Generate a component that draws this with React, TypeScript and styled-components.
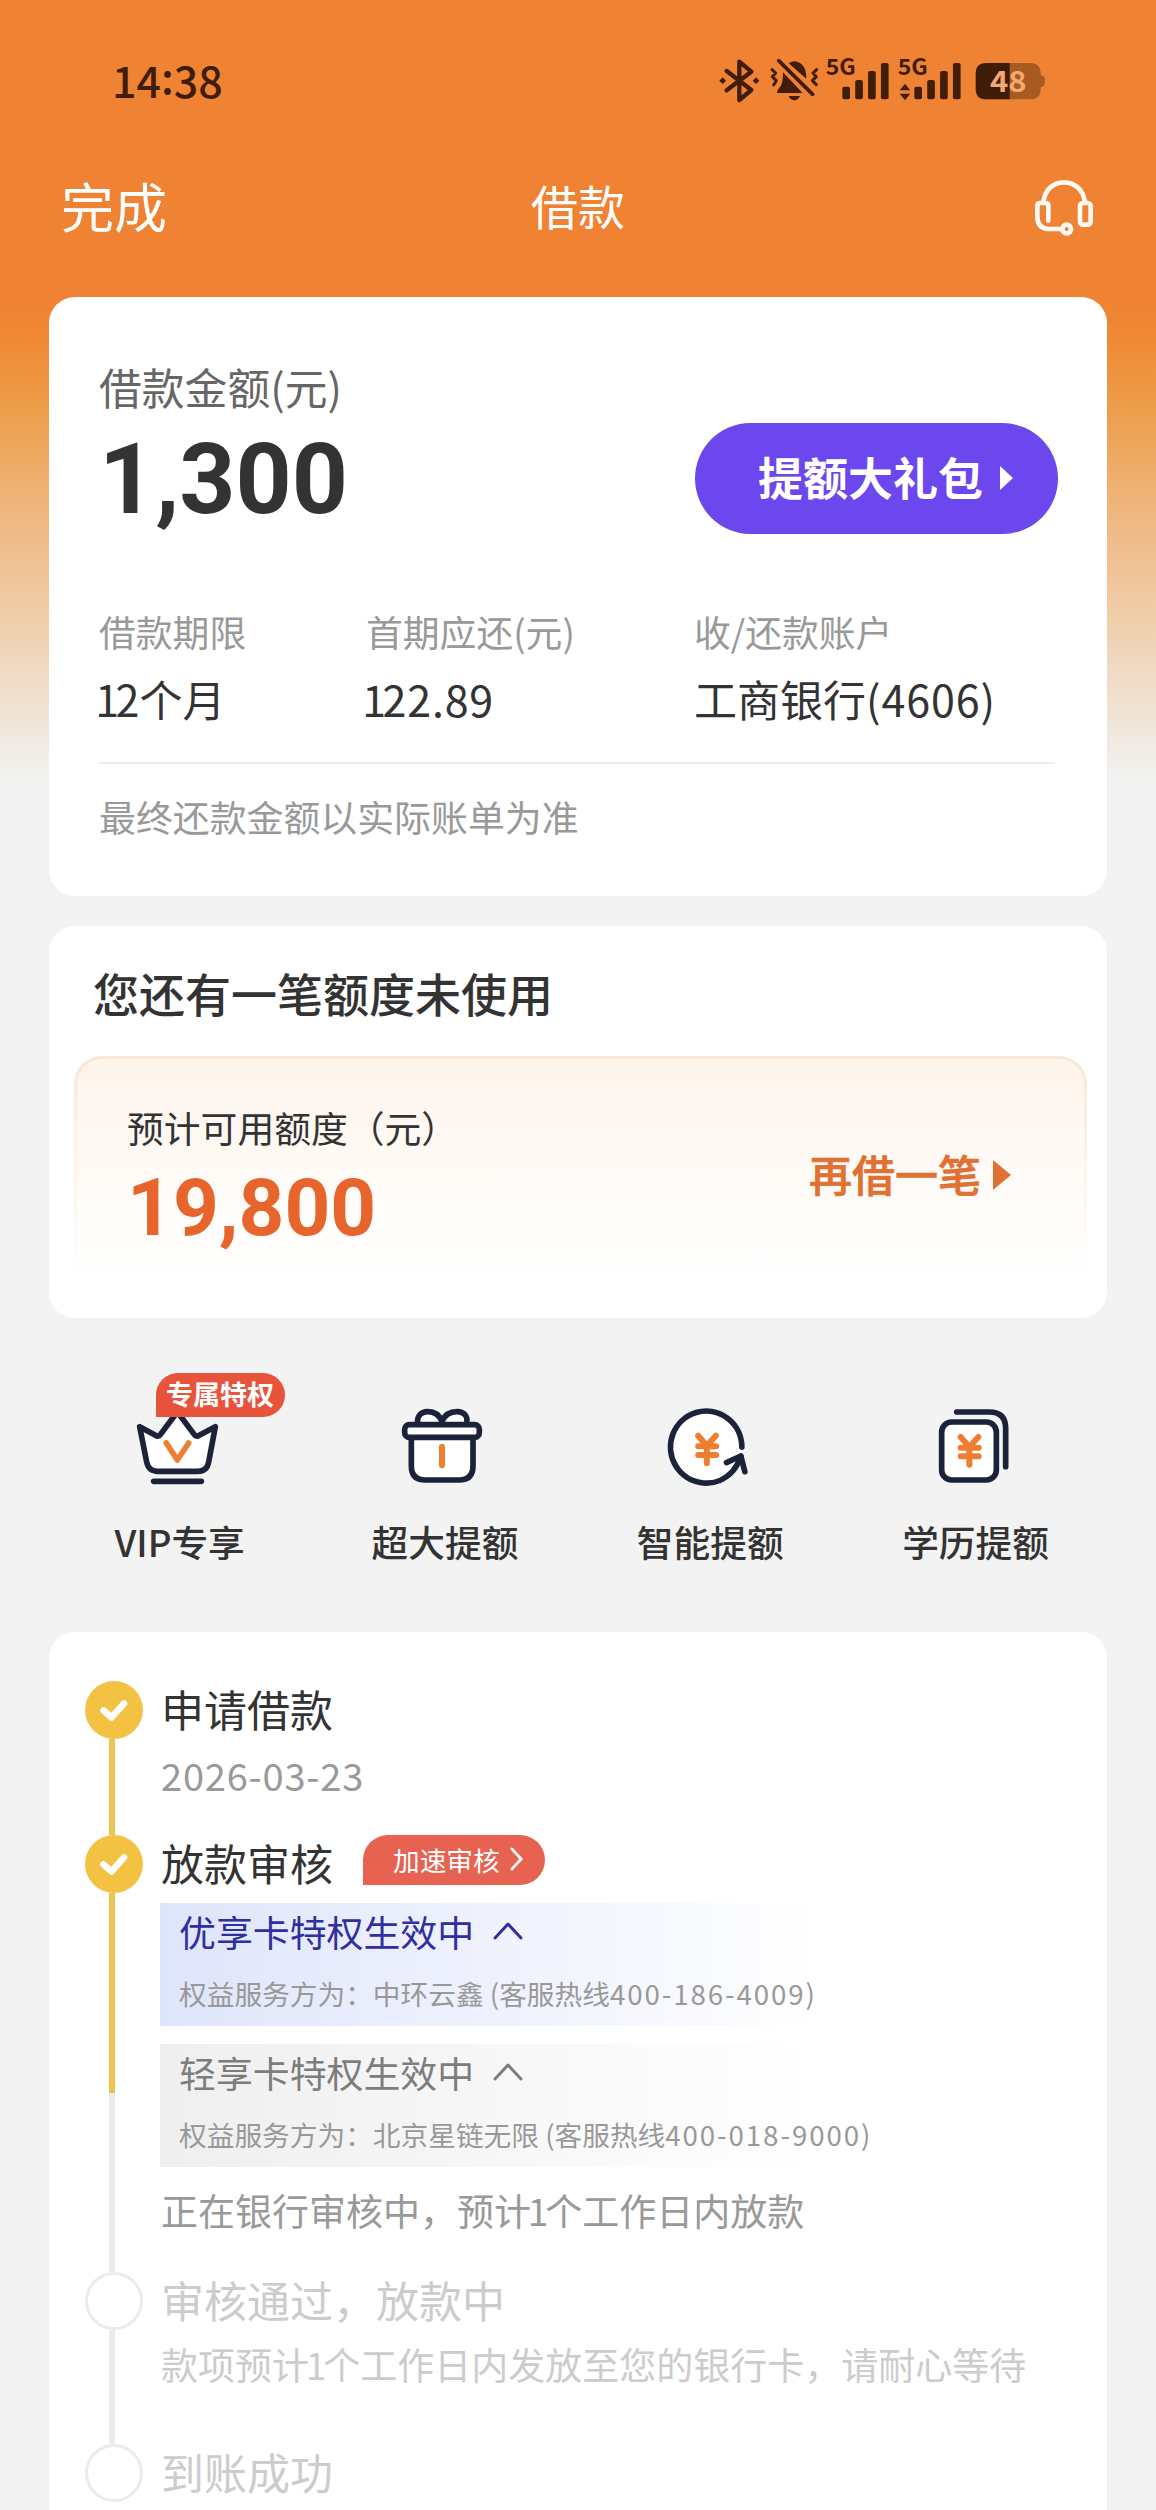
import React from "react";
import styled, { createGlobalStyle } from "styled-components";

const SANS = `"Noto Sans CJK SC", "Noto Sans", sans-serif`;
const NUMERIC = `Roboto, "Noto Sans CJK SC", sans-serif`;
const NAVY = "#1b2239";
const ORANGE = "#ee7f32";
const STATUS = "#3f1d08";

const GlobalStyle = createGlobalStyle`
  body { margin: 0; background: #f3f3f3; }
  * { box-sizing: border-box; }
`;

const Screen = styled.div`
  display: flex;
  flex-direction: column;
  width: 1156px;
  height: 2510px;
  overflow: hidden;
  font-family: ${SANS};
  color: #333;
  white-space: nowrap;
  background: linear-gradient(
    180deg,
    #ef8233 0, #ef8233 295px, #f08934 340px, #ed9e4a 410px, #efb072 485px,
    #f0be90 550px, #f0cca7 610px, #efdcc8 680px, #f1e8df 735px, #f3f3f3 785px
  );
`;

const StatusBar = styled.header`
  display: flex;
  justify-content: space-between;
  align-items: flex-start;
  height: 160px;
  padding: 40px 76px 0 112px;
`;

const Clock = styled.span`
  margin-top: -1px;
  font-size: 43px;
  font-weight: 500;
  line-height: 80px;
  color: ${STATUS};
`;

const Colon = styled.span`
  position: relative;
  top: -4px;
`;

const NavBar = styled.nav`
  display: grid;
  grid-template-columns: 1fr auto 1fr;
  align-items: center;
  height: 90px;
  margin-bottom: 47px;
  padding: 0 46px 0 61px;
  color: #fff;
`;

const DoneButton = styled.span`
  font-size: 53px;
  line-height: 84px;
  justify-self: start;
`;

const NavTitle = styled.h1`
  margin: 0;
  padding-right: 15px;
  font-size: 47px;
  font-weight: 400;
  line-height: 84px;
`;

const HeadsetSvg = styled.svg`
  justify-self: end;
  width: 90px;
  height: 80px;
  margin-top: 10px;
`;

const Card = styled.section<{ $height: number; $top?: number; $open?: boolean }>`
  display: flex;
  flex-direction: column;
  flex: none;
  height: ${(p) => p.$height}px;
  margin: ${(p) => p.$top ?? 0}px 49px 0;
  border-radius: ${(p) => (p.$open ? "26px 26px 0 0" : "26px")};
  background: #fff;
`;

const Line = styled.div<{ $size: number; $height: number; $top?: number; $color?: string; $weight?: number }>`
  margin-top: ${(p) => p.$top ?? 0}px;
  font-size: ${(p) => p.$size}px;
  line-height: ${(p) => p.$height}px;
  height: ${(p) => p.$height}px;
  color: ${(p) => p.$color ?? "#333"};
  font-weight: ${(p) => p.$weight ?? 400};
`;

const Figure = styled(Line)`
  font-family: ${NUMERIC};
  font-weight: 700;
`;

const LoanTop = styled.div`
  display: flex;
  justify-content: space-between;
  align-items: flex-start;
  height: 309px;
  padding: 59px 49px 0 50px;
`;

const GiftButton = styled.button`
  display: flex;
  align-items: center;
  gap: 17px;
  width: 363px;
  height: 111px;
  margin: 67px 0 0;
  padding: 0 0 4px 63px;
  border: 0;
  border-radius: 56px;
  background: #6b47ed;
  color: #fff;
  font: 700 45px ${SANS};
`;

const Triangle = styled.i<{ $w: number; $h: number; $color: string }>`
  width: 0;
  height: 0;
  margin-top: 3px;
  border-left: ${(p) => p.$w}px solid ${(p) => p.$color};
  border-top: ${(p) => p.$h / 2}px solid transparent;
  border-bottom: ${(p) => p.$h / 2}px solid transparent;
`;

const Details = styled.div`
  display: grid;
  grid-template-columns: 267px 328px 1fr;
  margin: 0 52px 0 50px;
  padding-bottom: 36px;
  border-bottom: 2px solid #ececec;
`;

const Inset = styled.div<{ $left: number }>`
  padding-left: ${(p) => p.$left}px;
`;

const QuotaPanel = styled.div`
  display: flex;
  justify-content: space-between;
  align-items: flex-start;
  height: 231px;
  margin: 34px 20px 0 25px;
  padding: 43px 73px 0 50px;
  border: 3px solid transparent;
  border-radius: 28px;
  background:
    linear-gradient(180deg, #fef4ec, #fffdfb 75%, #fff) padding-box,
    linear-gradient(180deg, #fae6d5, #fdf3ea 45%, #fff 95%) border-box;
`;

const BorrowAgain = styled.div`
  display: flex;
  align-items: center;
  gap: 12px;
  margin-top: 41px;
`;

const BorrowLabel = styled.span`
  font-size: 43px;
  font-weight: 500;
  line-height: 60px;
  color: #e17033;
  -webkit-text-stroke: 0.7px #e17033;
`;

const Services = styled.div`
  display: grid;
  grid-template-columns: repeat(4, 265.3px);
  flex: none;
  height: 314px;
  padding: 82px 0 0 47px;
`;

const Service = styled.div`
  position: relative;
  display: flex;
  flex-direction: column;
  align-items: center;
`;

const ServiceSvg = styled.svg`
  width: 96px;
  height: 96px;
  fill: none;
  stroke: ${NAVY};
  stroke-width: 17px;
  stroke-linecap: round;
  stroke-linejoin: round;
`;

const Privilege = styled.span`
  position: absolute;
  left: 109px;
  top: -27px;
  width: 129px;
  height: 44px;
  padding-left: 10px;
  border-radius: 22px 22px 22px 0;
  background: #e8533b;
  color: #fff;
  font-size: 27px;
  font-weight: 700;
  line-height: 41px;
`;

const Step = styled.div<{ $height: number }>`
  display: flex;
  flex: none;
  height: ${(p) => p.$height}px;
  padding-left: 36px;
`;

const Rail = styled.div`
  display: flex;
  flex-direction: column;
  flex: none;
  width: 76px;
`;

const Dot = styled.span<{ $done?: boolean }>`
  display: flex;
  flex: none;
  align-items: center;
  justify-content: center;
  width: 58px;
  height: 58px;
  border-radius: 50%;
  border: ${(p) => (p.$done ? "0" : "3px solid #ebebeb")};
  background: ${(p) => (p.$done ? "#f4c243" : "#fff")};
`;

const Track = styled.span<{ $color: string; $length?: number }>`
  flex: ${(p) => (p.$length ? `0 0 ${p.$length}px` : "1")};
  width: 6px;
  margin-left: 24px;
  background: ${(p) => p.$color};
`;

const StepBody = styled.div`
  flex: 1;
  margin-top: -1px;
`;

const TitleRow = styled.div`
  display: flex;
  align-items: flex-start;
`;

const SpeedUp = styled.span`
  display: flex;
  align-items: center;
  gap: 10px;
  width: 182px;
  height: 50px;
  margin: 1px 0 0 30px;
  padding: 0 0 2px 30px;
  border-radius: 25px 25px 25px 0;
  background: #e86252;
  color: #fff;
  font-size: 26.7px;
`;

const Benefit = styled.div<{ $tint: string }>`
  height: 123px;
  margin: 13px 0 18px -1px;
  padding: 3px 0 0 19px;
  background: linear-gradient(90deg, ${(p) => p.$tint}, #fff 660px);

  & + & {
    margin-top: 18px;
  }
`;

const BenefitTitle = styled.div<{ $color: string }>`
  display: flex;
  align-items: center;
  gap: 19px;
  height: 50px;
  font-size: 36.9px;
  line-height: 50px;
  color: ${(p) => p.$color};
`;

const Spaced = styled.span<{ $gap: number }>`
  letter-spacing: ${(p) => p.$gap}px;
`;

const One = styled.span`
  margin: 0 -0.085em;
`;

const Arrow = styled.svg<{ $w: number; $h: number }>`
  width: ${(p) => p.$w}px;
  height: ${(p) => p.$h}px;
  fill: none;
  stroke: currentColor;
  stroke-width: 3px;
  stroke-linecap: round;
  stroke-linejoin: round;
`;

function Bars({ x }: { x: number }) {
  const tops = [140, 120, 93, 69];
  return (
    <>
      {tops.map((top, i) => (
        <rect key={top} x={x + i * 38.6} y={top} width={23} height={178 - top} rx={6} />
      ))}
    </>
  );
}

function StatusIcons() {
  const stroke = { fill: "none", stroke: STATUS, strokeLinecap: "round" as const, strokeLinejoin: "round" as const };
  return (
    <svg width="380" height="80" viewBox="0 0 1140 240" fill={STATUS}>
      <path d="M80 93 L154 150 L118 180 V65 L154 95 L80 151" strokeWidth="13" {...stroke} />
      <path d="M68 112 l10 10 -10 10 -10 -10z M168 112 l10 10 -10 10 -10 -10z" />
      <path d="M236 62 L338 163" strokeWidth="11" {...stroke} />
      <path d="M249 97 L308 159 H231 Q231 150 242 138 Q249 126 249 97z" />
      <path d="M266 70 Q286 56 304 72 Q320 86 319 116z M266 168 H300 Q294 181 283 181 Q272 181 266 168z" />
      <path d="M216 89 l11 10 -10 11 12 12 -8 13 M350 89 l-11 10 10 11 -12 12 12 12" strokeWidth="9" {...stroke} />
      <text x="377" y="105" fontSize="67" fontWeight="700" fontFamily={SANS} textLength="90" lengthAdjust="spacingAndGlyphs">5G</text>
      <Bars x={427} />
      <text x="593" y="105" fontSize="67" fontWeight="700" fontFamily={SANS} textLength="90" lengthAdjust="spacingAndGlyphs">5G</text>
      <path d="M615 131 L631 151 H599z M599 161 H631 L615 181z" />
      <Bars x={643} />
      <path d="M859 69 H990 Q1022 69 1022 101 V104 Q1035 106 1035 123 Q1035 140 1022 142 V146 Q1022 178 990 178 H859z" fill="#a75b23" />
      <path d="M859 69 H929 V178 H859 Q827 178 827 146 V101 Q827 69 859 69z" />
      <text x="870" y="157" fontSize="88" fontWeight="700" fontFamily={SANS} fill="#f1a872" textLength="110" lengthAdjust="spacingAndGlyphs">48</text>
    </svg>
  );
}

function Headset() {
  return (
    <HeadsetSvg viewBox="0 0 270 240" fill="none" stroke="#fffaf3" strokeWidth="14" strokeLinecap="round" strokeLinejoin="round">
      <path d="M70 97 C74 60 98 37 132 37 C166 37 190 60 195 97" />
      <path d="M85 152 V107 Q85 99 77 99 H60 Q52 99 52 107 V140 Q52 177 90 177 H122" />
      <circle cx="140" cy="177" r="13" />
      <rect x="180" y="99" width="32" height="65" rx="9" />
    </HeadsetSvg>
  );
}

const Yen = ({ dx = 0, dy = 0 }) => (
  <path
    transform={`translate(${dx} ${dy})`}
    d="M236 227 L262 257 L289 227 M236 259 H290 M236 285 H290 M262 257 V310"
    style={{ stroke: ORANGE }}
    strokeWidth="18"
  />
);

const Crown = () => (
  <ServiceSvg viewBox="96 120 288 288">
    <path
      fill="#fff"
      d="M119 200 L169 227 Q176 231 181 224 L225 165 Q232 156 239 165 L283 224 Q288 231 295 227 L346 200 L326 306 Q321 334 293 334 H174 Q146 334 140 306z"
    />
    <path d="M161 364 H304" />
    <path d="M199 249 L232 300 L266 249" stroke={ORANGE} />
  </ServiceSvg>
);

const Gift = () => (
  <ServiceSvg viewBox="892 120 288 288">
    <path fill="#fff" d="M956 194 C948 172 962 155 985 155 C1008 155 1020 168 1027 184 C1034 168 1048 155 1072 155 C1095 155 1108 172 1099 194" />
    <path fill="#fff" d="M935 231 V318 Q935 360 977 360 H1078 Q1120 360 1120 318 V231" />
    <rect x="915" y="194" width="224" height="38" rx="14" fill="#fff" />
    <path d="M1027 260 V316" stroke={ORANGE} strokeWidth="18" />
  </ServiceSvg>
);

const SmartLoop = () => (
  <ServiceSvg viewBox="127.5 120 288 288">
    <circle cx="261" cy="260" r="102" fill="#fff" stroke="none" />
    <path d="M367 261 A107 108 0 1 0 340 333 Q355 315 364 289" />
    <path d="M321 308 L364 288 L376 335" />
    <Yen />
  </ServiceSvg>
);

const Diploma = () => (
  <ServiceSvg viewBox="924 120 288 288">
    <path d="M1010 156 H1108 Q1157 156 1157 205 V320" />
    <rect x="965" y="186" width="164" height="174" rx="30" fill="#fff" />
    <Yen dx={786} dy={4} />
  </ServiceSvg>
);

const services = [
  { name: "VIP专享", Icon: Crown, badge: "专属特权" },
  { name: "超大提额", Icon: Gift },
  { name: "智能提额", Icon: SmartLoop },
  { name: "学历提额", Icon: Diploma },
];

const details = [
  { label: "借款期限", value: <><One>1</One>2个月</> },
  { label: "首期应还(元)", value: <><One>1</One><Spaced $gap={0.8}>22.89</Spaced></> },
  { label: "收/还款账户", value: <>工商银行<Spaced $gap={0.9}>(4606)</Spaced></> },
];

const benefits = [
  { title: "优享卡特权生效中", owner: "中环云鑫", phone: "400-186-4009", tint: "#dfe5fb", color: "#2f2fa0" },
  { title: "轻享卡特权生效中", owner: "北京星链无限", phone: "400-018-9000", tint: "#efefef", color: "#7d7d7d" },
];

const DoneDot = () => (
  <Dot $done>
    <svg width="32" height="32" viewBox="0 0 32 32" fill="none" stroke="#fff" strokeWidth="6.5" strokeLinecap="round" strokeLinejoin="round">
      <path d="M5.5 16.5 L13.5 23.5 L26 9.5" />
    </svg>
  </Dot>
);

export default function App() {
  return (
    <Screen>
      <GlobalStyle />
      <StatusBar>
        <Clock>14<Colon>:</Colon>38</Clock>
        <StatusIcons />
      </StatusBar>
      <NavBar>
        <DoneButton>完成</DoneButton>
        <NavTitle>借款</NavTitle>
        <Headset />
      </NavBar>

      <Card $height={599}>
        <LoanTop>
          <div>
            <Line $size={42.8} $height={60} $color="#666">借款金额(元)</Line>
            <Figure $size={98} $height={100} $top={14}>1,300</Figure>
          </div>
          <GiftButton>
            提额大礼包
            <Triangle $w={13} $h={24} $color="#fff" />
          </GiftButton>
        </LoanTop>
        <Details>
          {details.map((d) => (
            <div key={d.label}>
              <Line $size={36.8} $height={50} $color="#999">{d.label}</Line>
              <Line $size={43} $height={56} $top={14}>{d.value}</Line>
            </div>
          ))}
        </Details>
        <Inset $left={50}>
          <Line $size={36.9} $height={50} $top={27} $color="#999">最终还款金额以实际账单为准</Line>
        </Inset>
      </Card>

      <Card $height={392} $top={30}>
        <Inset $left={44}>
          <Line $size={46} $height={60} $top={36} $weight={500}>您还有一笔额度未使用</Line>
        </Inset>
        <QuotaPanel>
          <div>
            <Line $size={36.8} $height={50}>预计可用额度（元）</Line>
            <Figure $size={80} $height={80} $top={16} $color="#e8642d">19,800</Figure>
          </div>
          <BorrowAgain>
            <BorrowLabel>再借一笔</BorrowLabel>
            <Triangle $w={18} $h={30} $color="#e17033" />
          </BorrowAgain>
        </QuotaPanel>
      </Card>

      <Services>
        {services.map(({ name, Icon, badge }) => (
          <Service key={name}>
            <Icon />
            {badge && <Privilege>{badge}</Privilege>}
            <Line $size={36.7} $height={50} $top={20} $weight={500}>{name}</Line>
          </Service>
        ))}
      </Services>

      <Card $height={878} $open>
        <Inset $left={0}>
          <Line $size={1} $height={49} />
        </Inset>
        <Step $height={154}>
          <Rail>
            <DoneDot />
            <Track $color="#ecc452" />
          </Rail>
          <StepBody>
            <Line $size={43} $height={56}>申请借款</Line>
            <Line $size={38} $height={50} $top={14} $color="#999">
              <Spaced $gap={0.8}>2026-03-23</Spaced>
            </Line>
          </StepBody>
        </Step>
        <Step $height={437}>
          <Rail>
            <DoneDot />
            <Track $color="#ecc452" $length={200} />
            <Track $color="#ebebeb" />
          </Rail>
          <StepBody>
            <TitleRow>
              <Line $size={43} $height={56}>放款审核</Line>
              <SpeedUp>
                加速审核
                <Arrow $w={13} $h={24} viewBox="0 0 14 26">
                  <path d="M2 2 L12 13 L2 24" />
                </Arrow>
              </SpeedUp>
            </TitleRow>
            {benefits.map((b) => (
              <Benefit key={b.title} $tint={b.tint}>
                <BenefitTitle $color={b.color}>
                  {b.title}
                  <Arrow $w={30} $h={18} viewBox="0 0 30 18">
                    <path d="M2 16 L15 2 L28 16" />
                  </Arrow>
                </BenefitTitle>
                <Line $size={27.7} $height={40} $top={17} $color="#999">
                  权益服务方为：{b.owner} (客服热线<Spaced $gap={1.9}>{b.phone}</Spaced>)
                </Line>
              </Benefit>
            ))}
            <Line $size={37} $height={50} $color="#999">正在银行审核中，预计<One>1</One>个工作日内放款</Line>
          </StepBody>
        </Step>
        <Step $height={172}>
          <Rail>
            <Dot />
            <Track $color="#ebebeb" />
          </Rail>
          <StepBody>
            <Line $size={43} $height={56} $color="#ccc">审核通过，放款中</Line>
            <Line $size={37} $height={50} $top={12} $color="#ccc">款项预计<One>1</One>个工作日内发放至您的银行卡，请耐心等待</Line>
          </StepBody>
        </Step>
        <Step $height={66}>
          <Rail>
            <Dot />
          </Rail>
          <StepBody>
            <Line $size={43} $height={56} $color="#ccc">到账成功</Line>
          </StepBody>
        </Step>
      </Card>
    </Screen>
  );
}
